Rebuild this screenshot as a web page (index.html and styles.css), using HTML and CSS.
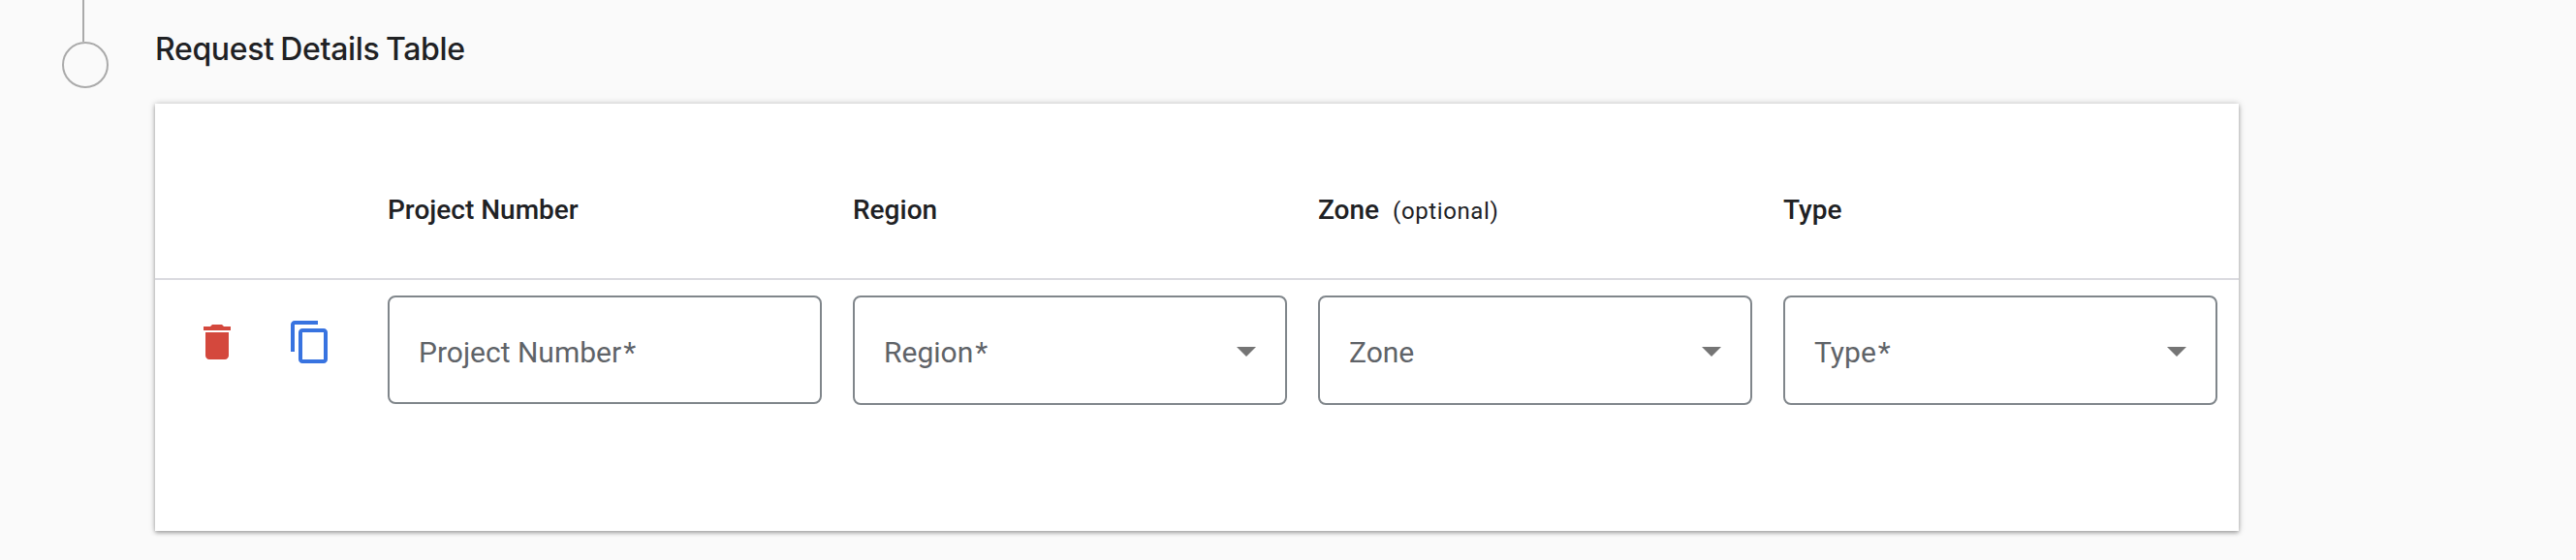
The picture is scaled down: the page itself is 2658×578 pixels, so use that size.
FILE: index.html
```
<!DOCTYPE html>
<html lang="en">
<head>
<meta charset="utf-8">
<title>Request Details Table</title>
<link rel="stylesheet" href="styles.css">
</head>
<body>
<main class="step">
  <div class="rail">
    <span class="rail-line"></span>
    <span class="rail-dot"></span>
  </div>
  <section class="content">
    <h2 class="title">Request Details Table</h2>
    <div class="card">
      <div class="row head">
        <div class="cell first">Project Number</div>
        <div class="cell">Region</div>
        <div class="cell">Zone<span class="optional">(optional)</span></div>
        <div class="cell">Type</div>
      </div>
      <div class="row body">
        <div class="actions">
          <svg class="icon delete" viewBox="0 0 24 24"><path d="M6 19c0 1.1.9 2 2 2h8c1.1 0 2-.9 2-2V7H6v12zM19 4h-3.5l-1-1h-5l-1 1H5v2h14V4z"/></svg>
          <svg class="icon copy" viewBox="0 0 24 24"><path d="M16 1H4c-1.1 0-2 .9-2 2v14h2V3h12V1zm3 4H8c-1.1 0-2 .9-2 2v14c0 1.1.9 2 2 2h11c1.1 0 2-.9 2-2V7c0-1.1-.9-2-2-2zm0 16H8V7h11v14z"/></svg>
        </div>
        <div class="field input"><span>Project Number<span class="star">*</span></span></div>
        <div class="field"><span>Region<span class="star">*</span></span><i class="arrow"></i></div>
        <div class="field"><span>Zone</span><i class="arrow"></i></div>
        <div class="field"><span>Type<span class="star">*</span></span><i class="arrow"></i></div>
      </div>
    </div>
  </section>
</main>
</body>
</html>
```
FILE: styles.css
```
* { box-sizing: border-box; }
body {
  margin: 0;
  height: 578px;
  overflow: hidden;
  background: #fafafa;
  font-family: Roboto, "Liberation Sans", sans-serif;
  color: #202124;
}
.step { display: flex; height: 578px; }
.rail {
  display: flex;
  flex-direction: column;
  width: 160px;
  padding-left: 64px;
}
.rail-line {
  width: 2px;
  height: 43px;
  margin-left: 21px;
  background: #aaa;
}
.rail-dot {
  width: 48px;
  height: 48px;
  border: 2px solid #aaa;
  border-radius: 50%;
}
.content { width: 2150px; }
.title {
  margin: 0;
  height: 107px;
  padding-top: 31px;
  font: 500 32px/40px Inter, sans-serif;
  letter-spacing: -.35px;
  word-spacing: -1.5px;
  white-space: nowrap;
}
.card {
  height: 441px;
  background: #fff;
  box-shadow: 0 2px 4px rgba(0, 0, 0, .28), 0 0 7px rgba(0, 0, 0, .2);
}
.row { display: flex; gap: 32px; }
.head {
  height: 182px;
  padding: 92px 22px 0 240px;
  border-bottom: 2px solid #dadae0;
  font-size: 28px;
  font-weight: 500;
  line-height: 36px;
}
.cell { width: 448px; flex: none; white-space: nowrap; }
.optional {
  margin-left: 14px;
  font-size: 24px;
  font-weight: 400;
  letter-spacing: .6px;
}
.body { gap: 32px; padding: 16px 22px 0 0; }
.actions {
  display: flex;
  gap: 48px;
  width: 208px;
  padding: 24px 0 0 40px;
}
.icon { width: 48px; height: 48px; flex: none; }
.delete { fill: #d4483d; }
.copy { fill: #3873e0; }
.field {
  display: flex;
  justify-content: space-between;
  flex: none;
  width: 448px;
  height: 113px;
  padding: 37px 30px 0;
  border: 2px solid #80868b;
  border-radius: 8px;
  color: #5f6368;
  font-size: 30px;
  line-height: 40px;
}
.star { margin-left: 2px; }
.input { height: 112px; }
.arrow {
  width: 20px;
  height: 10px;
  margin-top: 14px;
  background: #757575;
  clip-path: polygon(0 0, 100% 0, 50% 100%);
}
```
